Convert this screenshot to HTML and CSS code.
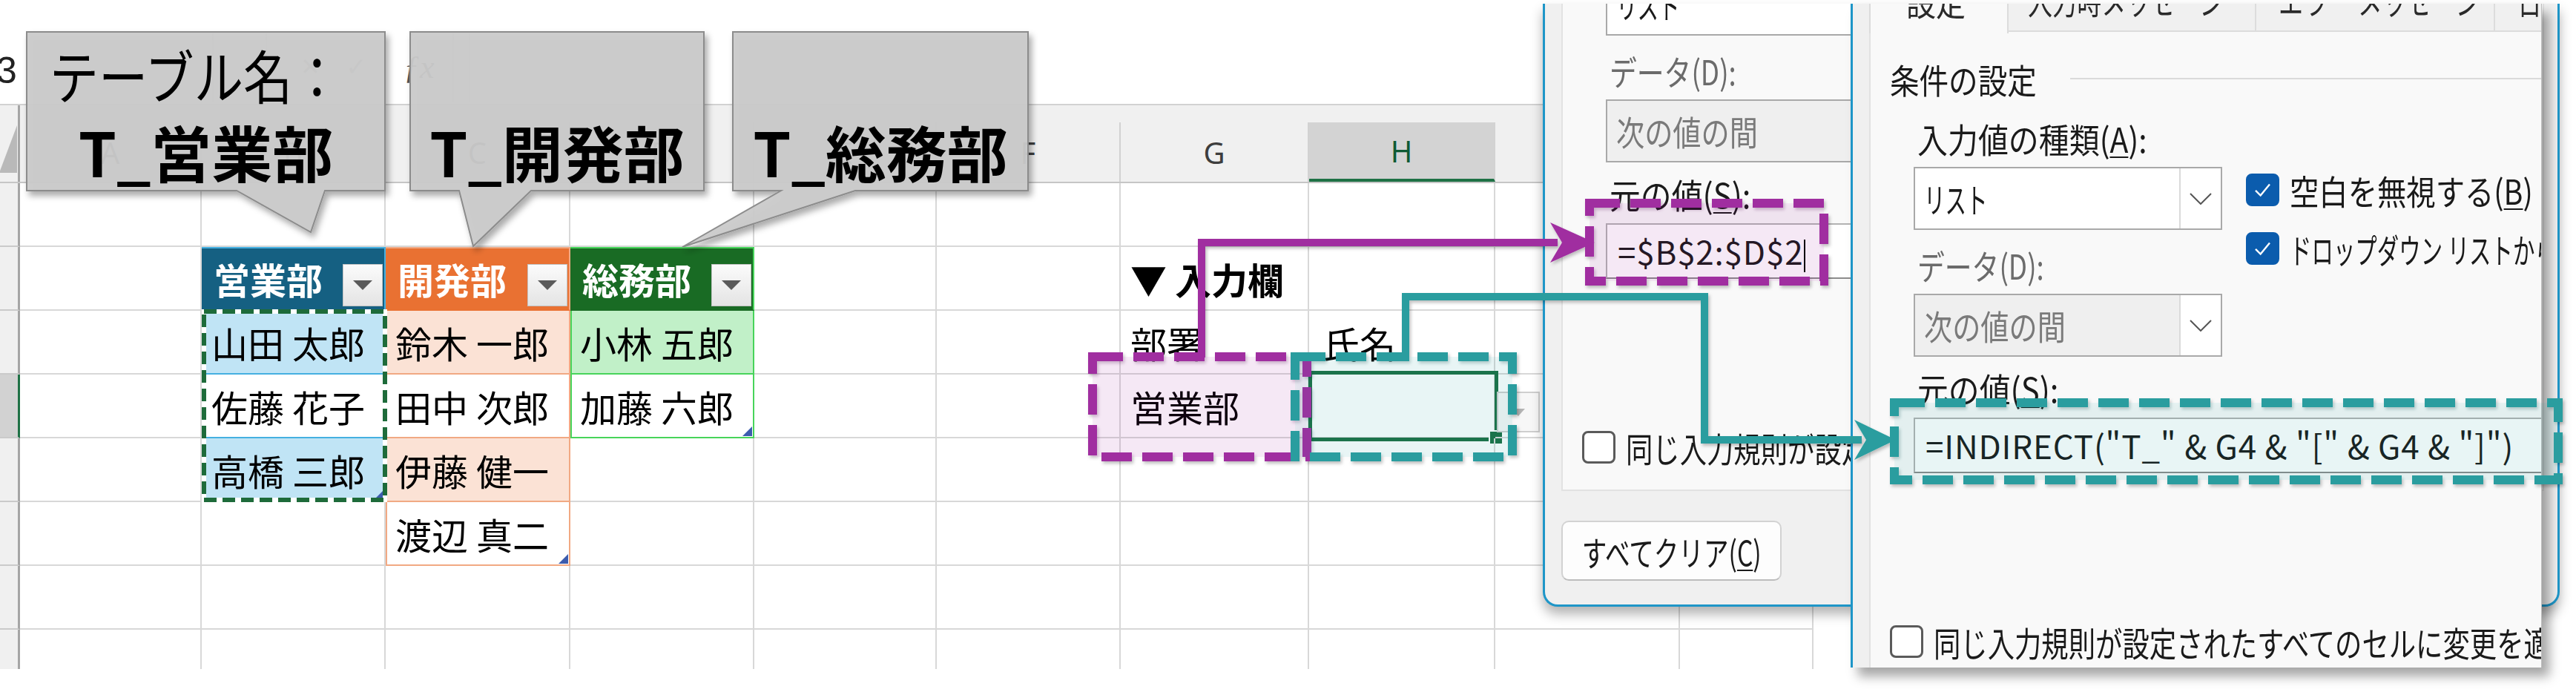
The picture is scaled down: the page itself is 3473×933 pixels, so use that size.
FILE: index.html
```html
<!DOCTYPE html>
<html lang="ja">
<head>
<meta charset="utf-8">
<title>INDIRECT dropdown</title>
<link rel="stylesheet" href="styles.css">
</head>
<body>
<div class="page">
  <div class="sheet">
    <div class="fbar">
      <div class="namebox">3</div>
      <div class="fsep"></div>
      <div class="fmid"></div>
      <div class="fsep"></div>
      <div class="ficons"><span class="ic-x">✕</span><span class="ic-ok">✓</span><span class="ic-fx">ƒx</span></div>
      <div class="fsep"></div>
      <div class="fsep fsep2"></div>
    </div>
    <div class="colhdr">
      <div class="corner"><span class="selall"></span></div>
      <div class="ch">A</div><div class="ch">B</div><div class="ch">C</div><div class="ch">D</div><div class="ch">E</div><div class="ch">F</div><div class="ch">G</div><div class="ch sel">H</div><div class="ch">I</div><div class="ch">J</div>
    </div>
    <div class="grid">
      <!-- row 1 -->
      <div class="rh"></div><div class="c"></div><div class="c"></div><div class="c"></div><div class="c"></div><div class="c"></div><div class="c"></div><div class="c"></div><div class="c"></div><div class="c"></div><div class="c"></div>
      <!-- row 2 -->
      <div class="rh"></div>
      <div class="c"></div>
      <div class="c th tb"><span>営業部</span><span class="flt"><svg width="26" height="13" viewBox="0 0 26 13"><path d="M0 0H26L13 13Z" fill="#5a5a5a"/></svg></span></div>
      <div class="c th to"><span>開発部</span><span class="flt"><svg width="26" height="13" viewBox="0 0 26 13"><path d="M0 0H26L13 13Z" fill="#5a5a5a"/></svg></span></div>
      <div class="c th tg"><span>総務部</span><span class="flt"><svg width="26" height="13" viewBox="0 0 26 13"><path d="M0 0H26L13 13Z" fill="#5a5a5a"/></svg></span></div>
      <div class="c"></div><div class="c"></div>
      <div class="c bold">▼ 入力欄</div>
      <div class="c"></div><div class="c"></div><div class="c"></div>
      <!-- row 3 -->
      <div class="rh"></div>
      <div class="c"></div>
      <div class="c tb band">山田 太郎</div>
      <div class="c to band">鈴木 一郎</div>
      <div class="c tg band">小林 五郎</div>
      <div class="c"></div><div class="c"></div>
      <div class="c">部署</div>
      <div class="c hpad">氏名</div>
      <div class="c"></div><div class="c"></div>
      <!-- row 4 -->
      <div class="rh sel"></div>
      <div class="c"></div>
      <div class="c tb">佐藤 花子</div>
      <div class="c to">田中 次郎</div>
      <div class="c tg last">加藤 六郎</div>
      <div class="c"></div><div class="c"></div>
      <div class="c">営業部</div>
      <div class="c active"><span class="selbox"></span><span class="fillh"></span><span class="dd"><svg width="18" height="10" viewBox="0 0 18 10"><path d="M0 0H18L9 10Z" fill="#b4b4b4"/></svg></span></div>
      <div class="c"></div><div class="c"></div>
      <!-- row 5 -->
      <div class="rh"></div>
      <div class="c"></div>
      <div class="c tb band last">高橋 三郎</div>
      <div class="c to band">伊藤 健一</div>
      <div class="c"></div><div class="c"></div><div class="c"></div><div class="c"></div><div class="c"></div><div class="c"></div><div class="c"></div>
      <!-- row 6 -->
      <div class="rh"></div>
      <div class="c"></div><div class="c"></div>
      <div class="c to last">渡辺 真二</div>
      <div class="c"></div><div class="c"></div><div class="c"></div><div class="c"></div><div class="c"></div><div class="c"></div><div class="c"></div>
      <!-- row 7 -->
      <div class="rh"></div><div class="c"></div><div class="c"></div><div class="c"></div><div class="c"></div><div class="c"></div><div class="c"></div><div class="c"></div><div class="c"></div><div class="c"></div><div class="c"></div>
      <!-- row 8 (partial) -->
      <div class="rh"></div><div class="c"></div><div class="c"></div><div class="c"></div><div class="c"></div><div class="c"></div><div class="c"></div><div class="c"></div><div class="c"></div><div class="c"></div><div class="c"></div>
    </div>
  </div>

  <!-- callout shapes -->
  <svg class="callouts" width="1400" height="345" viewBox="0 0 1400 345">
    <defs>
      <filter id="cs" x="-10%" y="-10%" width="130%" height="140%"><feDropShadow dx="4" dy="6" stdDeviation="4" flood-color="#000" flood-opacity="0.35"/></filter>
    </defs>
    <g filter="url(#cs)" fill="rgba(203,203,203,0.94)" stroke="#8c8c8c" stroke-width="2">
      <polygon points="36,43 519,43 519,257 438,257 419,313 319,257 36,257"/>
      <polygon points="553,43 949,43 949,257 716,257 638,332 619,257 553,257"/>
      <polygon points="988,43 1386,43 1386,257 1153,257 920,333 1053,257 988,257"/>
    </g>
  </svg>
  <div class="co co1"><div class="l1">テーブル名：</div><div class="l2">T_営業部</div></div>
  <div class="co co2"><div class="l2">T_開発部</div></div>
  <div class="co co3"><div class="l2">T_総務部</div></div>

  <!-- dialog A (behind) -->
  <div class="dlg dlg-a">
    <div class="dlg-in">
      <div class="tabs">
        <div class="tab on"><span class="t">設定</span></div>
        <div class="tab t2"><span class="t">入力時メッセージ</span></div>
        <div class="tab t3"><span class="t">エラー メッセージ</span></div>
        <div class="tab t4"><span class="t">日本語入力</span></div>
      </div>
      <div class="panel">
        <div class="grp"><span class="t">条件の設定</span><i></i></div>
        <div class="prow">
          <div class="pleft">
            <div class="lbl"><span class="t">入力値の種類(<u>A</u>):</span></div>
            <div class="combo c1"><span class="cv"><span class="t">リスト</span></span><b><svg width="30" height="16" viewBox="0 0 30 16"><path d="M1 1L15 15L29 1" fill="none" stroke="#555" stroke-width="2"/></svg></b></div>
            <div class="lbl dis gap1"><span class="t">データ(D):</span></div>
            <div class="combo dis gap2"><span class="cv"><span class="t">次の値の間</span></span><b><svg width="30" height="16" viewBox="0 0 30 16"><path d="M1 1L15 15L29 1" fill="none" stroke="#555" stroke-width="2"/></svg></b></div>
          </div>
          <div class="pright">
            <div class="chk on k1"><span class="box"><svg viewBox="0 0 40 40" width="39" height="38"><path d="M10 21L17 28L30 12" fill="none" stroke="#fff" stroke-width="2.5"/></svg></span><span class="t">空白を無視する(<u>B</u>)</span></div>
            <div class="chk on k2 gap3"><span class="box"><svg viewBox="0 0 40 40" width="39" height="38"><path d="M10 21L17 28L30 12" fill="none" stroke="#fff" stroke-width="2.5"/></svg></span><span class="t">ドロップダウン リストから選択する(<u>I</u>)</span></div>
          </div>
        </div>
        <div class="lbl src-lbl"><span class="t">元の値(<u>S</u>):</span></div>
        <div class="src">=$B$2:$D$2<span class="caret"></span></div>
        <div class="chk all"><span class="box"></span><span class="t">同じ入力規則が設定されたすべてのセルに変更を適用する(<u>P</u>)</span></div>
      </div>
      <div class="foot"><div class="btn"><span class="t">すべてクリア(<u>C</u>)</span></div></div>
    </div>
  </div>

  <!-- dialog B (front) -->
  <div class="dlg dlg-b">
    <div class="dlg-in">
      <div class="tabs">
        <div class="tab on"><span class="t">設定</span></div>
        <div class="tab t2"><span class="t">入力時メッセージ</span></div>
        <div class="tab t3"><span class="t">エラー メッセージ</span></div>
        <div class="tab t4"><span class="t">日本語入力</span></div>
      </div>
      <div class="panel">
        <div class="grp"><span class="t">条件の設定</span><i></i></div>
        <div class="prow">
          <div class="pleft">
            <div class="lbl"><span class="t">入力値の種類(<u>A</u>):</span></div>
            <div class="combo c1"><span class="cv"><span class="t">リスト</span></span><b><svg width="30" height="16" viewBox="0 0 30 16"><path d="M1 1L15 15L29 1" fill="none" stroke="#555" stroke-width="2"/></svg></b></div>
            <div class="lbl dis gap1"><span class="t">データ(D):</span></div>
            <div class="combo dis gap2"><span class="cv"><span class="t">次の値の間</span></span><b><svg width="30" height="16" viewBox="0 0 30 16"><path d="M1 1L15 15L29 1" fill="none" stroke="#555" stroke-width="2"/></svg></b></div>
          </div>
          <div class="pright">
            <div class="chk on k1"><span class="box"><svg viewBox="0 0 40 40" width="39" height="38"><path d="M10 21L17 28L30 12" fill="none" stroke="#fff" stroke-width="2.5"/></svg></span><span class="t">空白を無視する(<u>B</u>)</span></div>
            <div class="chk on k2 gap3"><span class="box"><svg viewBox="0 0 40 40" width="39" height="38"><path d="M10 21L17 28L30 12" fill="none" stroke="#fff" stroke-width="2.5"/></svg></span><span class="t">ドロップダウン リストから選択する(<u>I</u>)</span></div>
          </div>
        </div>
        <div class="lbl src-lbl"><span class="t">元の値(<u>S</u>):</span></div>
        <div class="src">=INDIRECT("T_" &amp; G4 &amp; "[" &amp; G4 &amp; "]")</div>
        <div class="chk all"><span class="box"></span><span class="t">同じ入力規則が設定されたすべてのセルに変更を適用する(<u>P</u>)</span></div>
      </div>
      <div class="foot"><div class="btn"><span class="t">すべてクリア(<u>C</u>)</span></div></div>
    </div>
  </div>

  <!-- annotation overlay -->
  <svg class="ovl" width="3473" height="933" viewBox="0 0 3473 933">
    <defs>
      <filter id="sh" x="-5%" y="-5%" width="110%" height="120%"><feDropShadow dx="2" dy="3" stdDeviation="2" flood-color="#000" flood-opacity="0.25"/></filter>
    </defs>
    <rect x="275" y="420" width="244" height="254" fill="none" stroke="#fff" stroke-width="6"/>
    <rect x="275" y="420" width="244" height="254" fill="none" stroke="#1e6b3a" stroke-width="6" stroke-dasharray="17 8"/>
    <g filter="url(#sh)">
      <rect x="1473" y="481" width="289" height="135" fill="rgba(160,46,160,0.07)" stroke="#a02ea0" stroke-width="12" stroke-dasharray="41 14"/>
      <rect x="2143" y="274" width="316" height="105" fill="rgba(160,46,160,0.07)" stroke="#a02ea0" stroke-width="12" stroke-dasharray="41 14"/>
      <path d="M1620 482V327H2100" fill="none" stroke="#a02ea0" stroke-width="10"/>
      <path d="M2090 300L2150 327L2090 354L2106 327Z" fill="#a02ea0"/>
      <rect x="1746" y="481" width="293" height="135" fill="rgba(42,157,160,0.07)" stroke="#2a9d9f" stroke-width="12" stroke-dasharray="41 14"/>
      <rect x="2554" y="543" width="895" height="104" fill="rgba(42,157,160,0.07)" stroke="#2a9d9f" stroke-width="12" stroke-dasharray="41 14"/>
      <path d="M1895 487V400H2298V593H2510" fill="none" stroke="#2a9d9f" stroke-width="10"/>
      <path d="M2500 566L2556 593L2500 620L2516 593Z" fill="#2a9d9f"/>
    </g>
  </svg>
</div>
</body>
</html>
```

FILE: styles.css
```css
* { box-sizing: border-box; margin: 0; padding: 0; }
html, body { width: 3473px; height: 933px; overflow: hidden; background: #fff; }
body { font-family: "Noto Sans CJK JP", "Noto Sans", sans-serif; color: #000; }

.page { position: relative; width: 3473px; height: 933px; --cols: 27px 245px 248px 249px 248px 246px 248px 254px 251px 249px 180px; }

/* ---------- sheet ---------- */
.sheet { width: 2445px; }

.fbar { height: 142px; display: flex; align-items: flex-start; border-bottom: 2px solid #d2d2d2; background: #fff; }
.namebox { width: 291px; margin-left: -5px; padding-top: 70px; font: 50px/50px "Liberation Sans", sans-serif; color: #222; }
.fsep { width: 2px; height: 94px; margin-top: 43px; background: #dedede; }
.fmid { width: 70px; }
.ficons { width: 250px; height: 140px; display: flex; align-items: center; padding: 40px 0 0 45px; color: #9a9a9a; }
.ic-x { font: 32px "DejaVu Sans", sans-serif; width: 61px; }
.ic-ok { font: 34px "DejaVu Sans", sans-serif; width: 78px; }
.ic-fx { font: italic 44px "Liberation Serif", serif; color: #555; }
.fsep2 { margin-left: 20px; }

.colhdr { height: 105px; display: grid; grid-template-columns: var(--cols); background: #f0f0f0; border-bottom: 2px solid #c6c6c6; align-items: end; }
.corner { align-self: stretch; border-right: 3px solid #a5a5a5; position: relative; }
.selall { position: absolute; right: 1px; bottom: 12px; width: 24px; height: 64px; background: #b9b9b9; clip-path: polygon(100% 0, 100% 100%, 0 100%); }
.ch { height: 80px; border-right: 2px solid #d2d2d2; display: flex; align-items: center; justify-content: center; font: 40px "Noto Sans", sans-serif; color: #3d3d3d; }
.ch.sel { background: #d3d3d3; border-bottom: 4px solid #1e7145; color: #0f5a34; }

.grid { display: grid; grid-template-columns: var(--cols); grid-template-rows: repeat(7, 86px) 53px; }
.grid > :nth-last-child(-n+11) { border-bottom: 0; }
.rh { background: #f0f0f0; border-right: 3px solid #a5a5a5; border-bottom: 2px solid #cacaca; }
.rh.sel { background: #d2d2d2; border-right-color: #1e7145; }

.c { position: relative; display: flex; align-items: center; padding-left: 13px; border-right: 2px solid #d8d8d8; border-bottom: 2px solid #d8d8d8; font-size: 49px; white-space: nowrap; }
.c.bold { font-weight: bold; }
.c.hpad { padding-left: 19px; }

/* tables */
.tb { border-color: #45b0e1; box-shadow: inset 2px 0 0 #45b0e1; }
.to { border-color: #f1a983; box-shadow: inset 2px 0 0 #f1a983; }
.tg { border-color: #47d45a; box-shadow: inset 2px 0 0 #47d45a; }
.tb.band { background: #c0e4f5; }
.to.band { background: #fbe2d5; }
.tg.band { background: #c1f0c8; }
.th { color: #fff; font-weight: bold; padding-left: 16px; }
.th.tb { background: #156082; border-bottom-color: #156082; box-shadow: inset 0 2px 0 #45b0e1; }
.th.to { background: #e97132; border-bottom-color: #e97132; box-shadow: inset 0 2px 0 #f1a983; }
.th.tg { background: #196b24; border-bottom-color: #196b24; box-shadow: inset 0 2px 0 #47d45a; }
.flt { margin-left: auto; margin-right: 2px; align-self: flex-end; margin-bottom: 4px; width: 54px; height: 57px; display: flex; align-items: center; justify-content: center; background: linear-gradient(#fbfbfb, #e4e4e4); border: 1px solid #c2c2c2; }
.last::after { content: ""; position: absolute; right: 1px; bottom: 1px; width: 13px; height: 13px; background: #3c5cae; clip-path: polygon(100% 0, 100% 100%, 0 100%); }

/* active cell */
.selbox { position: absolute; left: -1px; top: -5px; right: -6px; bottom: -6px; border: 5px solid #1e7145; }
.fillh { position: absolute; right: -13px; bottom: -11px; width: 20px; height: 20px; background: #1e7145; border: 2px solid #fff; }
.dd { position: absolute; left: 253px; top: 23px; width: 58px; height: 55px; background: #f7f7f7; border: 2px solid #cfcfcf; display: flex; align-items: center; justify-content: center; }

/* ---------- callouts ---------- */
.callouts { position: absolute; left: 0; top: 0; z-index: 1; }
.co { position: absolute; top: 43px; height: 214px; z-index: 2; display: flex; flex-direction: column; justify-content: flex-end; align-items: center; padding-bottom: 1px; line-height: 104px; white-space: nowrap; color: #000; }
.co1 { left: 36px; width: 483px; }
.co2 { left: 553px; width: 396px; }
.co3 { left: 988px; width: 398px; }
.co .l1 { font-size: 78px; transform: scaleX(0.85); margin-left: -28px; }
.co .l2 { font-size: 82px; font-weight: bold; }

/* ---------- dialogs ---------- */
.dlg { position: absolute; overflow: hidden; background: #f0f0f0; z-index: 3; }
.dlg-a { left: 2080px; top: 5px; width: 1371px; height: 813px; border: 3px solid #1e96c8; border-top: 0; border-radius: 0 0 20px 20px; box-shadow: 0 10px 16px rgba(0,0,0,0.3); }
.dlg-b { left: 2495px; top: 5px; width: 932px; height: 895px; border-left: 3px solid #1e96c8; border-right: 1px solid #bdbdbd; box-shadow: 10px 12px 14px rgba(0,0,0,0.35); }
.dlg-in { width: 1365px; font-size: 46px; color: #1a1a1a; white-space: nowrap; }
.dlg-a .dlg-in { margin-top: -312px; }
.dlg-b .dlg-in { margin-top: -50px; }

/* condensed UI text: each label is narrowed to the width of the original UI font */
.t { display: inline-block; transform: scaleX(var(--sx, 0.86)); transform-origin: 0 50%; }
.tab .t { --sx: 0.72; }
.tab.on .t { --sx: 0.87; }
.grp .t { --sx: 0.86; }
.lbl .t { --sx: 0.89; }
.lbl.dis .t { --sx: 0.8; }
.src-lbl .t { --sx: 0.91; }
.combo.c1 .t { --sx: 0.62; }
.combo.dis .t { --sx: 0.83; }
.k1 .t { --sx: 0.855; }
.k2 .t { --sx: 0.64; }
.chk.all .t { --sx: 0.79; }
.btn .t { --sx: 0.73; transform-origin: 50% 50%; }

.tabs { height: 88px; display: flex; padding-left: 22px; }
.tab { height: 88px; line-height: 88px; background: #f0f0f0; border-bottom: 2px solid #dcdcdc; border-right: 2px solid #dcdcdc; padding-left: 30px; color: #2a2a2a; overflow: hidden; }
.tab.on { width: 188px; height: 90px; background: #f9f9f9; border: 2px solid #dcdcdc; border-bottom: 0; padding-left: 48px; position: relative; z-index: 1; }
.tab.t2 { width: 334px; padding-left: 26px; }
.tab.t3 { width: 322px; }
.tab.t4 { width: 322px; }

.panel { margin-left: 22px; width: 1325px; height: 881px; background: #f9f9f9; border: 2px solid #e2e2e2; border-top: 0; padding-top: 40px; }
.grp { height: 46px; display: flex; align-items: center; padding-left: 26px; line-height: 46px; }
.grp i { flex: 1; height: 2px; background: #dadada; }
.grp .t { width: 243px; }
.prow { display: flex; margin-top: 34px; }
.pleft { width: 474px; padding-left: 58px; }
.lbl { height: 46px; line-height: 46px; padding-left: 5px; }
.lbl.dis { color: #6b6b6b; }
.gap1 { margin-top: 24px; }
.gap2 { margin-top: 10px; }
.combo { margin-top: 16px; width: 416px; height: 85px; display: flex; border: 2px solid #a9a9a9; background: #fff; }
.combo .cv { flex: 1; padding-left: 12px; line-height: 81px; }
.combo b { width: 56px; border-left: 2px solid #dadada; background: #fff; display: flex; align-items: center; justify-content: center; }
.combo.dis { background: #efefef; color: #7a7a7a; }
.pright { margin-left: 32px; padding-top: 70px; }
.chk { display: flex; align-items: center; height: 46px; line-height: 46px; }
.chk .box { flex: none; width: 45px; height: 44px; margin-right: 14px; border: 3px solid #5a5a5a; border-radius: 8px; background: #fff; display: flex; align-items: center; justify-content: center; }
.chk.on .box { background: #0b5cad; border-color: #0b5cad; }
.gap3 { margin-top: 33px; }
.src-lbl { margin-top: 19px; padding-left: 63px; }
.src { margin: 17px 0 0 58px; width: 1207px; height: 75px; border: 2px solid #b3b3b3; border-bottom-color: #8c8c8c; background: #fff; line-height: 71px; font-size: 44px; letter-spacing: 0.8px; padding-left: 14px; }
.caret { display: inline-block; width: 2px; height: 44px; background: #000; vertical-align: middle; margin-left: 1px; }
.chk.all { margin-top: 204px; padding-left: 26px; }

.foot { height: 153px; padding: 40px 0 0 22px; }
.btn { width: 297px; height: 81px; border: 2px solid #d2d2d2; border-bottom-color: #bdbdbd; border-radius: 10px; background: #fdfdfd; display: flex; align-items: center; justify-content: center; }

u { text-decoration-thickness: 2px; text-underline-offset: 5px; }

/* ---------- annotations ---------- */
.ovl { position: absolute; left: 0; top: 0; z-index: 4; pointer-events: none; }
```
